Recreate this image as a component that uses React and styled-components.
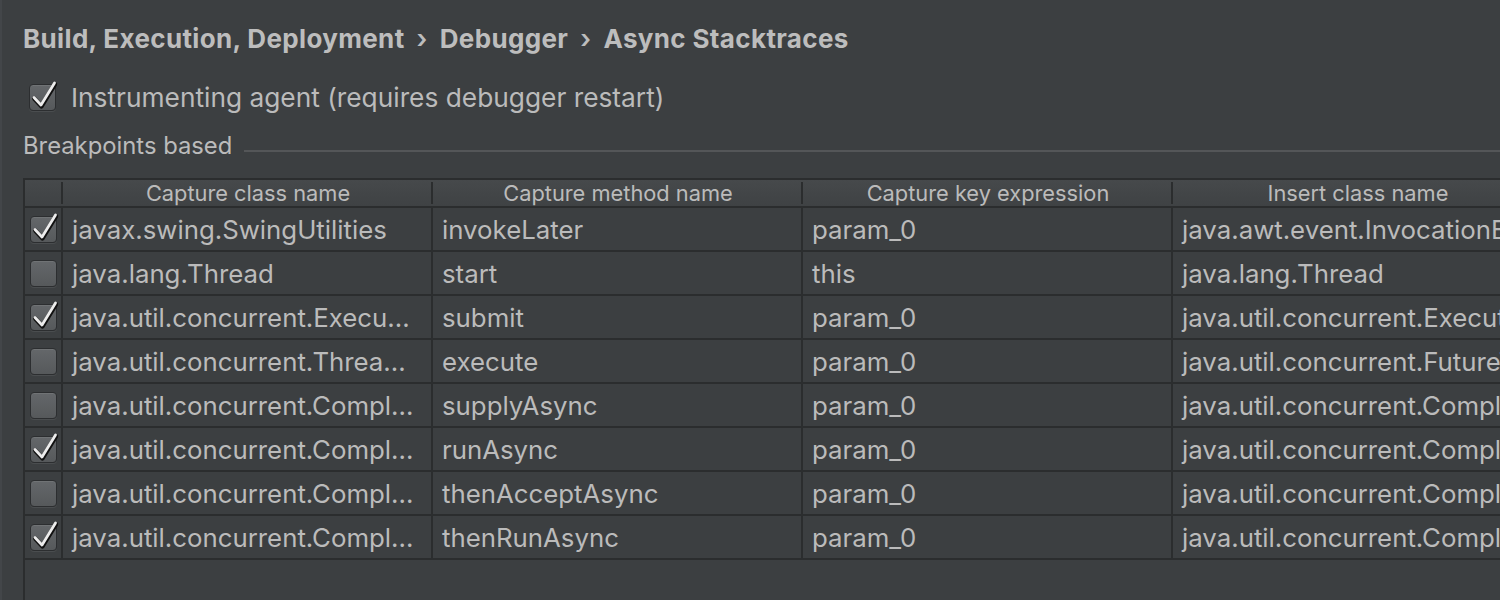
import React from "react";
import styled, { createGlobalStyle } from "styled-components";

const Global = createGlobalStyle`
  html, body { margin: 0; padding: 0; background: #3c3f41; overflow: hidden; }
  body { font-family: Inter, "Open Sans", "Liberation Sans", sans-serif; color: #bbbbbb; }
`;

const Page = styled.div`
  width: 1500px;
  height: 600px;
  overflow: hidden;
  box-sizing: border-box;
  padding-left: 21px;
  border-left: 2px solid #434649;
  background: #3c3f41;
`;

const Title = styled.h1`
  margin: 0;
  padding-top: 22px;
  font-size: 26px;
  line-height: 34px;
  font-weight: 700;
  color: #bdbdbd;
  letter-spacing: 0.35px;
  white-space: nowrap;
`;

const Sep = styled.span`
  display: inline-block;
  margin: 0 12px;
  font-weight: 600;
`;

const AgentRow = styled.label`
  display: flex;
  align-items: center;
  gap: 15px;
  margin-top: 26px;
  margin-left: 6px;
  height: 30px;
  font-size: 26.3px;
  color: #bbbbbb;
`;

const Group = styled.div`
  display: flex;
  align-items: center;
  margin-top: 18px;
  height: 30px;
  gap: 12px;
`;

const GroupTitle = styled.span`
  font-size: 23.8px;
  color: #bbbbbb;
  white-space: nowrap;
`;

const GroupLine = styled.span`
  flex: 1;
  height: 2px;
  margin-top: 11px;
  background: #545658;
`;

const BoxWrap = styled.span`
  position: relative;
  display: inline-block;
  width: 27px;
  height: 27px;
  flex: none;
`;

const Box = styled.span`
  position: absolute;
  inset: 0;
  border-radius: 4px;
  background: linear-gradient(#64676a, #56595b);
  border: 1px solid #2c2e30;
  box-shadow: 0 1px 0 #4a4d4f, inset 0 1px 0 #707375;
  box-sizing: border-box;
`;

const Tick = styled.svg`
  position: absolute;
  left: 0;
  top: 0;
  overflow: visible;
`;

function Checkbox({ checked }) {
  return (
    <BoxWrap>
      <Box />
      {checked && (
        <Tick width="27" height="27" viewBox="0 0 27 27">
          <path d="M5 13.5 L12 21 L25.5 -1" fill="none" stroke="#111" strokeWidth="4.6" strokeLinecap="round" strokeLinejoin="round" transform="translate(0.4,1.2)" />
          <path d="M5 13.5 L12 21 L25.5 -1" fill="none" stroke="#ececec" strokeWidth="2.8" strokeLinecap="round" strokeLinejoin="round" />
        </Tick>
      )}
    </BoxWrap>
  );
}

const TableWrap = styled.div`
  margin-top: 18px;
  width: 1600px;
  height: 500px;
  border-left: 2px solid #2b2d2e;
  border-top: 2px solid #2b2d2e;
  box-sizing: border-box;
`;

const Grid = styled.div`
  display: grid;
  grid-template-columns: 38px 370px 370px 370px 370px;
`;

const HeadCell = styled.div`
  height: 26px;
  display: flex;
  align-items: center;
  justify-content: center;
  font-size: 21.8px;
  color: #bbbbbb;
  background: linear-gradient(#46494b, #3f4244);
  border-bottom: 2px solid #2b2d2e;
  position: relative;
  white-space: nowrap;
  &::after {
    content: "";
    position: absolute;
    right: 0;
    top: 2px;
    bottom: 2px;
    width: 2px;
    background: #2b2d2e;
  }
`;

const Cell = styled.div`
  height: 42px;
  display: flex;
  align-items: center;
  justify-content: ${(p) => (p.$center ? "center" : "flex-start")};
  padding-left: ${(p) => (p.$center ? "0" : "9px")};
  font-size: 25.8px;
  color: #bbbbbb;
  border-right: 2px solid #2b2d2e;
  border-bottom: 2px solid #2b2d2e;
  white-space: nowrap;
  overflow: hidden;
`;

const rows = [
  [true, "javax.swing.SwingUtilities", "invokeLater", "param_0", "java.awt.event.InvocationEvent"],
  [false, "java.lang.Thread", "start", "this", "java.lang.Thread"],
  [true, "java.util.concurrent.Execu...", "submit", "param_0", "java.util.concurrent.Executors"],
  [false, "java.util.concurrent.Threa...", "execute", "param_0", "java.util.concurrent.FutureTask"],
  [false, "java.util.concurrent.Compl...", "supplyAsync", "param_0", "java.util.concurrent.CompletableFuture"],
  [true, "java.util.concurrent.Compl...", "runAsync", "param_0", "java.util.concurrent.CompletableFuture"],
  [false, "java.util.concurrent.Compl...", "thenAcceptAsync", "param_0", "java.util.concurrent.CompletableFuture"],
  [true, "java.util.concurrent.Compl...", "thenRunAsync", "param_0", "java.util.concurrent.CompletableFuture"],
];

export default function App() {
  return (
    <>
      <Global />
      <Page>
        <Title>
          Build, Execution, Deployment<Sep>›</Sep>Debugger<Sep>›</Sep>Async Stacktraces
        </Title>
        <AgentRow>
          <Checkbox checked />
          Instrumenting agent (requires debugger restart)
        </AgentRow>
        <Group>
          <GroupTitle>Breakpoints based</GroupTitle>
          <GroupLine />
        </Group>
        <TableWrap>
          <Grid>
            <HeadCell />
            <HeadCell>Capture class name</HeadCell>
            <HeadCell>Capture method name</HeadCell>
            <HeadCell>Capture key expression</HeadCell>
            <HeadCell>Insert class name</HeadCell>
            {rows.map((r, i) => (
              <React.Fragment key={i}>
                <Cell $center>
                  <Checkbox checked={r[0]} />
                </Cell>
                <Cell>{r[1]}</Cell>
                <Cell>{r[2]}</Cell>
                <Cell>{r[3]}</Cell>
                <Cell>{r[4]}</Cell>
              </React.Fragment>
            ))}
          </Grid>
        </TableWrap>
      </Page>
    </>
  );
}
